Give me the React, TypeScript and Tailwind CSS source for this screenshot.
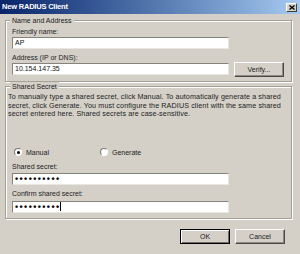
const face = "font-['Liberation_Sans',Arial,sans-serif]";

function GroupBox({ title, className = "", children }: { title: string; className?: string; children: React.ReactNode }) {
  return (
    <div className={`ml-[5px] mr-[8px] border border-[#a3a098] shadow-[inset_1px_1px_0_#fff,1px_1px_0_#fff] ${className}`}>
      <div className="-mt-[5px] ml-[4px] h-[9px] w-fit bg-[#d4d0c8] px-[2px] text-[7px] leading-[9px] text-[#1a1a1a]">{title}</div>
      {children}
    </div>
  );
}

function TextBox({ value, secret = false, caret = false }: { value: string; secret?: boolean; caret?: boolean }) {
  return (
    <div className="flex h-[12px] w-[217px] items-center border border-[#85837c] border-r-[#e8e6e0] border-b-[#e8e6e0] bg-white pl-[2px]">
      {secret ? (
        <span className="text-[9px] leading-[10px] font-bold tracking-[1.4px] text-black">{value}</span>
      ) : (
        <span className="text-[7px] leading-[10px] text-[#111]">{value}</span>
      )}
      {caret && <span className="-ml-[1px] h-[9px] w-px bg-black" />}
    </div>
  );
}

function Button({ label, primary = false }: { label: string; primary?: boolean }) {
  return (
    <button
      className={`flex h-[15px] w-[50px] items-center justify-center bg-[#d4d0c8] text-[7px] leading-none text-[#222] ${
        primary
          ? "border border-black shadow-[inset_1px_1px_0_#fff,inset_-1px_-1px_0_#6e6c66]"
          : "border border-t-white border-l-white border-r-[#4a4944] border-b-[#4a4944] shadow-[inset_-1px_-1px_0_#8c8a84]"
      }`}
    >
      {label}
    </button>
  );
}

function Radio({ label, checked = false }: { label: string; checked?: boolean }) {
  return (
    <div className="flex items-center gap-[4px]">
      <span className="flex h-[8px] w-[8px] items-center justify-center rounded-full border border-[#7a7872] border-r-white border-b-white bg-white">
        {checked && <span className="h-[3px] w-[3px] rounded-full bg-black" />}
      </span>
      <span className="text-[7px] leading-[9px] text-[#222]">{label}</span>
    </div>
  );
}

export default function App() {
  return (
    <div className={`${face} flex h-[254px] w-[300px] flex-col overflow-hidden bg-[#d4d0c8]`}>
      <div className="flex h-[14px] items-center justify-between bg-linear-to-r from-[#0a246a] to-[#a6caf0] pl-[2px] pr-[3px]">
        <span className="text-[7.5px] font-bold leading-none tracking-[-0.2px] text-white">New RADIUS Client</span>
        <span className="flex h-[9px] w-[11px] items-center justify-center border border-t-white border-l-white border-r-[#404040] border-b-[#404040] bg-[#d4d0c8]">
          <svg width="6" height="5" viewBox="0 0 6 5">
            <path d="M0.5 0.5 L5.5 4.5 M5.5 0.5 L0.5 4.5" stroke="#000" strokeWidth="1.3" />
          </svg>
        </span>
      </div>

      <GroupBox title="Name and Address" className="mt-[6px] pb-[4px]">
        <div className="flex flex-col px-[6px] pt-[2px] text-[7px] text-[#222]">
          <span className="h-[9px] leading-[9px]">Friendly name:</span>
          <div className="mt-px">
            <TextBox value="AP" />
          </div>
          <span className="mt-[5px] h-[8px] leading-[8px]">Address (IP or DNS):</span>
          <div className="flex items-start gap-[5px]">
            <div className="mt-px">
              <TextBox value="10.154.147.35" />
            </div>
            <Button label="Verify..." />
          </div>
        </div>
      </GroupBox>

      <GroupBox title="Shared Secret" className="mt-[4px] pb-[5px]">
        <p className="mt-[2px] whitespace-nowrap px-[2px] text-[7.2px] leading-[8.5px] tracking-[0.1px] text-[#222]">
          To manually type a shared secret, click Manual. To automatically generate a shared
          <br />
          secret, click Generate. You must configure the RADIUS client with the same shared
          <br />
          secret entered here. Shared secrets are case-sensitive.
        </p>
        <div className="mt-[29px] flex pl-[8px]">
          <div className="w-[86px]">
            <Radio label="Manual" checked />
          </div>
          <Radio label="Generate" />
        </div>
        <div className="flex flex-col px-[6px] text-[7px] text-[#222]">
          <span className="mt-[6px] h-[8px] leading-[8px]">Shared secret:</span>
          <div className="mt-[2px]">
            <TextBox value="••••••••••" secret />
          </div>
          <span className="mt-[5px] h-[8px] leading-[8px]">Confirm shared secret:</span>
          <div className="mt-[3px]">
            <TextBox value="••••••••••" secret caret />
          </div>
        </div>
      </GroupBox>

      <div className="mr-[8px] mt-[10px] flex justify-end gap-[5px] pr-[7px]">
        <Button label="OK" primary />
        <Button label="Cancel" />
      </div>
    </div>
  );
}
